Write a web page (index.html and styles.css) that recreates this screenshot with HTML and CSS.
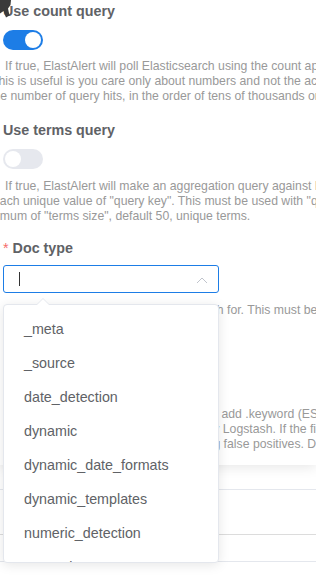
FILE: index.html
```html
<!DOCTYPE html>
<html lang="en">

<head>
    <meta charset="utf-8">
    <title>Rule settings</title>
    <link rel="stylesheet" href="styles.css">
</head>

<body>

    <div class="page">
        <div class="card">
            <div class="form-item">
                <div class="label">Use count query</div>
                <span class="switch is-on"><span class="knob"></span></span>
                <div class="hint">
                    <div class="line c1">If true, ElastAlert will poll Elasticsearch using the count api, and not download all of the matching documents.</div>
                    <div class="line c2">This is useful is you care only about numbers and not the actual data.</div>
                    <div class="line c3">the number of query hits, in the order of tens of thousands or more.</div>
                </div>
            </div>

            <div class="form-item">
                <div class="label">Use terms query</div>
                <span class="switch"><span class="knob"></span></span>
                <div class="hint">
                    <div class="line t1">If true, ElastAlert will make an aggregation query against Elasticsearch to get counts of documents matching</div>
                    <div class="line t2">each unique value of "query key". This must be used with "query key" and "doc type".</div>
                    <div class="line t3">maximum of "terms size", default 50, unique terms.</div>
                </div>
            </div>

            <div class="form-item doc">
                <div class="label"><span class="required">*</span>Doc type</div>
                <div class="select">
                    <div class="input">
                        <span class="caret"></span>
                        <svg class="arrow" width="12" height="7" viewBox="0 0 12 7">
                            <polyline points="1,6 6,1 11,6" fill="none" stroke="#c0c4cc" stroke-width="1"/>
                        </svg>
                    </div>
                    <div class="dropdown">
                        <span class="popper-arrow"></span>
                        <ul class="options">
                            <li>_meta</li>
                            <li>_source</li>
                            <li>date_detection</li>
                            <li>dynamic</li>
                            <li>dynamic_date_formats</li>
                            <li>dynamic_templates</li>
                            <li>numeric_detection</li>
                            <li>properties</li>
                        </ul>
                    </div>
                </div>
                <div class="hint">
                    <div class="line d1">Specify the _type of document to search for. This must be present if you use</div>
                    <div class="line">use_count_query or use_terms_query.</div>
                </div>
            </div>

            <div class="form-item">
                <div class="label">Use raw keyword</div>
                <span class="switch is-on"><span class="knob"></span></span>
                <div class="hint hint-wide">
                    <div class="line k1">will add .keyword (ES5) or .raw (ES2) to the field name</div>
                    <div class="line k2">analyzed by Logstash. If the field is not analyzed, leave it off</div>
                    <div class="line k3">preventing false positives. Defaults to true.</div>
                </div>
            </div>
        </div>

        <div class="table">
            <div class="row row-tall"></div>
            <div class="row"></div>
        </div>
    </div>

    <svg class="pointer" width="14" height="20" viewBox="0 0 14 20">
        <path d="M0 0 L11 0 L10.5 5 L8 8.5 L9.5 15.5 L6 17.5 L3.5 11 L0 13.5 Z" fill="#3a3a3a"/>
    </svg>

</body>

</html>
```

FILE: styles.css
```css
body {
    margin: 0;
    width: 316px;
    height: 582px;
    overflow: hidden;
    background-color: #fff;
    font-family: "Liberation Sans", Arial, sans-serif;
}

.page {
    position: relative;
}

.card {
    padding: 0 0 13px 3px;
    background-color: #fff;
    box-shadow: 0 2px 12px 0 rgba(0, 0, 0, 0.1);
    position: relative;
    z-index: 1;
}

.form-item + .form-item {
    margin-top: 15px;
}

.form-item.doc {
    margin-top: 13px;
}

.form-item.doc + .form-item {
    margin-top: 14px;
}

.label {
    height: 22px;
    line-height: 22px;
    font-size: 14.3px;
    font-weight: 700;
    color: #606266;
}

.required {
    color: #f56c6c;
    margin-right: 4px;
    font-weight: 400;
}

.switch {
    display: block;
    margin-top: 8px;
    width: 40px;
    height: 20px;
    border-radius: 10px;
    background-color: #e6e8ee;
    position: relative;
}

.switch.is-on {
    background-color: #1d7de6;
}

.knob {
    position: absolute;
    top: 2px;
    left: 2px;
    width: 16px;
    height: 16px;
    border-radius: 50%;
    background-color: #fff;
}

.switch.is-on .knob {
    left: 22px;
}

.hint {
    margin-top: 9px;
    font-size: 12.25px;
    line-height: 15px;
    color: #999;
}

.form-item + .form-item .hint {
    margin-top: 10px;
}

.line {
    white-space: nowrap;
}

.c1 { margin-left: 2px; }
.c2 { margin-left: -12px; }
.c3 { margin-left: -13px; }
.t1 { margin-left: 2px; }
.t2 { margin-left: -10px; }
.t3 { margin-left: -29px; }
.d1 { margin-left: 2px; }
.k1 { margin-left: 198px; }
.k2 { margin-left: 151px; }
.k3 { margin-left: 160px; }

/* select */
.select {
    position: relative;
    width: 216px;
    margin-top: 6px;
}

.doc .hint {
    margin-top: 7px;
}

.input {
    box-sizing: border-box;
    height: 28px;
    border: 1px solid #1d7de6;
    border-radius: 3px;
    position: relative;
}

.caret {
    position: absolute;
    left: 15px;
    top: 6px;
    height: 14px;
    border-left: 1px solid #333;
}

.arrow {
    position: absolute;
    right: 10px;
    top: 11px;
}

.dropdown {
    position: absolute;
    top: 39px;
    left: 0;
    z-index: 5;
    box-sizing: border-box;
    width: 216px;
    height: 259px;
    background-color: #fff;
    border: 1px solid #e4e7ed;
    border-radius: 4px;
    box-shadow: 0 2px 12px 0 rgba(0, 0, 0, 0.1);
}

.popper-arrow {
    position: absolute;
    top: -7px;
    left: 33px;
    width: 0;
    height: 0;
    border-left: 6px solid transparent;
    border-right: 6px solid transparent;
    border-bottom: 6px solid #e4e7ed;
}

.popper-arrow::after {
    content: "";
    position: absolute;
    top: 1px;
    left: -6px;
    border-left: 6px solid transparent;
    border-right: 6px solid transparent;
    border-bottom: 6px solid #fff;
}

.options {
    list-style: none;
    margin: 0;
    padding: 7px 0 0;
    height: 100%;
    box-sizing: border-box;
    overflow: hidden;
}

.options li {
    height: 34px;
    line-height: 34px;
    padding: 0 20px;
    font-size: 14.3px;
    color: #606266;
    white-space: nowrap;
}

/* below the card */
.table {
    margin-top: 24px;
    border-top: 1px solid #e4e7ed;
}

.row {
    height: 26px;
    border-bottom: 1px solid #e4e7ed;
}

.row-tall {
    height: 44px;
    border-bottom-color: #dcdcdc;
}

.pointer {
    position: absolute;
    top: 0;
    left: 0;
    z-index: 10;
}
```
